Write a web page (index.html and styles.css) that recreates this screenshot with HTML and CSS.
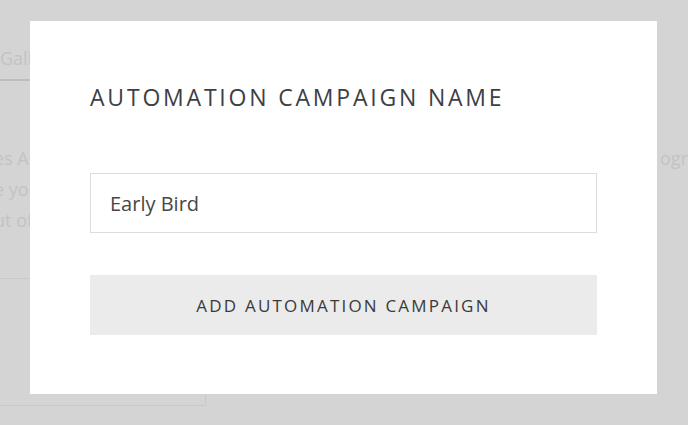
FILE: index.html
```html
<!DOCTYPE html>
<html lang="en">

<head>
    <meta charset="UTF-8">
    <link rel="stylesheet" href="styles.css">
</head>

<body>
    <div class="page">
        <div class="tabs">
            <span class="tab">Gallery</span>
        </div>
        <div class="intro">
            <div class="intro-line">
                <span>es Automation campaigns</span>
                <span>ogr</span>
            </div>
            <div class="intro-line">
                <span>e your contacts</span>
            </div>
            <div class="intro-line">
                <span>ut of the box</span>
            </div>
        </div>
        <div class="divider"></div>
        <div class="panel"></div>
    </div>

    <div class="modal">
        <h2 class="modal-title">Automation Campaign Name</h2>
        <input type="text" class="name-input" value="Early Bird" />
        <button class="add-btn">Add Automation Campaign</button>
    </div>
</body>

</html>
```

FILE: styles.css
```css
* {
    box-sizing: border-box;
}

body {
    margin: 0;
    width: 688px;
    height: 425px;
    overflow: hidden;
    background-color: #d4d4d4;
    font-family: "Open Sans", "Liberation Sans", sans-serif;
    position: relative;
}

/* page underneath the overlay */
.page {
    color: #c3c3c3;
    font-size: 18px;
}

.tabs {
    height: 81px;
    padding-top: 46px;
    border-bottom: 2px solid #bdbdbd;
    width: 60px;
}

.tab {
    display: block;
    margin-left: 0;
}

.intro {
    padding-top: 62px;
}

.intro-line {
    display: flex;
    justify-content: space-between;
    height: 31px;
    line-height: 31px;
    margin-left: -6px;
}

.divider {
    margin-top: 42px;
    width: 60px;
    border-top: 1px solid #c8c8c8;
}

.panel {
    margin-top: 114px;
    width: 206px;
    height: 13px;
    border-right: 1px solid #c8c8c8;
    border-bottom: 1px solid #c8c8c8;
}

/* modal */
.modal {
    position: absolute;
    left: 30px;
    top: 21px;
    width: 627px;
    height: 373px;
    background-color: #fff;
    padding: 61px 60px 0;
}

.modal-title {
    margin: 0 0 60px;
    font-size: 23px;
    font-weight: 400;
    line-height: 31px;
    text-transform: uppercase;
    letter-spacing: 2.8px;
    color: #3c4045;
}

.name-input {
    display: block;
    width: 507px;
    height: 60px;
    padding: 0 19px;
    border: 1px solid #dcdcdc;
    font-family: inherit;
    font-size: 20px;
    color: #474747;
    outline: none;
}

.add-btn {
    display: block;
    width: 507px;
    height: 60px;
    margin-top: 42px;
    border: none;
    background-color: #ebebeb;
    font-family: inherit;
    font-size: 17px;
    text-transform: uppercase;
    letter-spacing: 2.2px;
    color: #3a3a3a;
}
```
